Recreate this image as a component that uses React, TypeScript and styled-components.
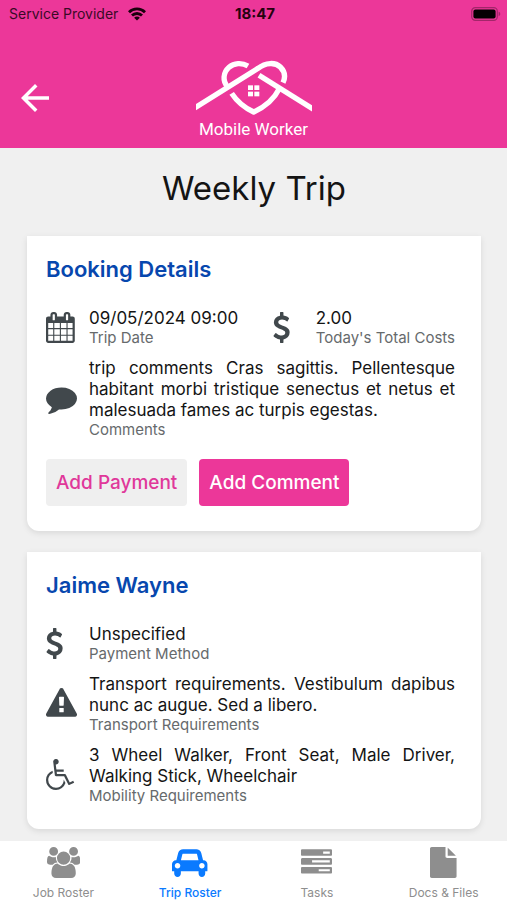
import React from "react";
import styled, { createGlobalStyle } from "styled-components";
import { MdArrowBack } from "react-icons/md";

const color = {
  pink: "#ec3799",
  page: "#f0f0f0",
  heading: "#0747ae",
  icon: "#41484c",
  text: "#141414",
  muted: "#666a6c",
  tab: "#8e8e8e",
  active: "#0a7aff",
};

const GlobalStyle = createGlobalStyle`
  *, *::before, *::after { box-sizing: border-box; }
  body {
    margin: 0;
    background: ${color.page};
    color: ${color.text};
    font-family: Inter, "Liberation Sans", sans-serif;
  }
  h1, h2, dl, dt, dd { margin: 0; }
  button { font-family: inherit; border: 0; cursor: pointer; }
`;

const Page = styled.div`
  display: flex;
  flex-direction: column;
  min-height: 100vh;
`;

const Header = styled.header`
  background: ${color.pink};
  padding-bottom: 9px;
`;

const StatusBar = styled.div`
  display: grid;
  grid-template-columns: 1fr auto 1fr;
  align-items: center;
  height: 27px;
  padding: 0 6px 0 9px;
  font-size: 14px;
  color: #3a0a26;
`;

const Carrier = styled.div`
  display: flex;
  align-items: center;
  gap: 10px;
  white-space: nowrap;
`;

const Clock = styled.time`
  font-size: 15px;
  font-weight: 700;
  color: #26020f;
`;

const BatterySlot = styled.div`
  display: flex;
  justify-content: flex-end;
`;

const Brandbar = styled.div`
  display: grid;
  grid-template-columns: 1fr auto 1fr;
  align-items: start;
  padding: 33px 14px 0;
`;

const BackButton = styled.button`
  display: flex;
  justify-self: start;
  padding: 17px 0;
  background: none;
  color: #fff;
`;

const Brand = styled.div`
  display: flex;
  flex-direction: column;
  align-items: center;
  gap: 3px;
  font-family: Roboto, sans-serif;
  font-size: 17px;
  line-height: 20px;
  color: #fff;
`;

const Main = styled.main`
  flex: 1;
  display: flex;
  flex-direction: column;
  gap: 21px;
  padding: 19px 26px 12px 27px;
`;

const Title = styled.h1`
  font-size: 33px;
  line-height: 42px;
  font-weight: 400;
  text-align: center;
  padding-bottom: 6px;
`;

const Card = styled.section`
  background: #fff;
  border-radius: 0 0 12px 12px;
  box-shadow: 0 2px 6px rgba(0, 0, 0, 0.1);
  padding: 20px 26px 25px 19px;
`;

const CardTitle = styled.h2`
  font-size: 22px;
  line-height: 26px;
  font-weight: 600;
  color: ${color.heading};
  margin-bottom: 26px;
`;

const Details = styled.dl`
  display: flex;
  flex-direction: column;
  gap: 12px;
`;

const Row = styled.div`
  display: flex;
  justify-content: space-between;
`;

const Item = styled.div<{ $grow?: boolean }>`
  display: flex;
  align-items: center;
  flex: ${(p) => (p.$grow ? "1" : "none")};
`;

const IconSlot = styled.div`
  display: flex;
  flex: none;
  width: 43px;
`;

const Field = styled.div`
  display: flex;
  flex: 1;
  flex-direction: column-reverse;
`;

const Value = styled.dd`
  font-size: 17px;
  line-height: 21px;
  text-align: justify;
`;

const Label = styled.dt`
  font-size: 15px;
  line-height: 17px;
  color: ${color.muted};
`;

const Actions = styled.div`
  display: flex;
  gap: 12px;
  margin-top: 21px;
`;

const ActionButton = styled.button<{ $primary?: boolean }>`
  height: 47px;
  padding: 0 10px;
  border-radius: 4px;
  font-size: 19px;
  font-weight: 500;
  white-space: nowrap;
  background: ${(p) => (p.$primary ? color.pink : "#efefef")};
  color: ${(p) => (p.$primary ? "#fff" : "#e0389a")};
`;

const TabBar = styled.nav`
  display: grid;
  grid-template-columns: repeat(4, 1fr);
  background: #fff;
  height: 59px;
`;

const Tab = styled.a<{ $active?: boolean }>`
  display: flex;
  flex-direction: column;
  align-items: center;
  gap: 7px;
  padding-top: 6px;
  font-size: 12px;
  line-height: 16px;
  font-weight: ${(p) => (p.$active ? 500 : 400)};
  color: ${(p) => (p.$active ? color.active : color.tab)};
  text-decoration: none;
`;

const glyphs = {
  calendar: {
    box: "64 0 1664 1792",
    d: "M192 1664h288v-288h-288v288zm352 0h320v-288h-320v288zm-352-352h288v-320h-288v320zm352 0h320v-320h-320v320zm-352-384h288v-288h-288v288zm736 736h320v-288h-320v288zm-384-736h320v-288h-320v288zm768 736h288v-288h-288v288zm-384-352h320v-320h-320v320zm-352-864v-288q0-13-9.5-22.5t-22.5-9.5h-64q-13 0-22.5 9.5t-9.5 22.5v288q0 13 9.5 22.5t22.5 9.5h64q13 0 22.5-9.5t9.5-22.5zm736 864h288v-320h-288v320zm-384-384h320v-288h-320v288zm384 0h288v-288h-288v288zm32-480v-288q0-13-9.5-22.5t-22.5-9.5h-64q-13 0-22.5 9.5t-9.5 22.5v288q0 13 9.5 22.5t22.5 9.5h64q13 0 22.5-9.5t9.5-22.5zm384-64v1280q0 52-38 90t-90 38h-1408q-52 0-90-38t-38-90v-1280q0-52 38-90t90-38h128v-96q0-66 47-113t113-47h64q66 0 113 47t47 113v96h384v-96q0-66 47-113t113-47h64q66 0 113 47t47 113v96h128q52 0 90 38t38 90z",
  },
  dollar: {
    box: "400 0 1024 1792",
    d: "M1362 1185q0 153-99.5 263.5t-258.5 136.5v175q0 14-9 23t-23 9h-135q-13 0-22.5-9.5t-9.5-22.5v-175q-66-9-127.5-31t-101.5-44.5-74-48-46.5-37.5-17.5-18q-17-21-2-41l103-135q7-10 23-12 15-2 24 9l2 2q113 99 243 125 37 8 74 8 81 0 142.5-43t61.5-122q0-28-15-53t-33.5-42-58.5-37.5-66-32-80-32.5q-39-16-61.5-25t-61.5-26.5-62.5-31-56.5-35.5-53.5-42.5-43.5-49-35.5-58-21-66.5-8.5-78q0-138 98-242t255-134v-180q0-13 9.5-22.5t22.5-9.5h135q14 0 23 9t9 23v176q57 6 110.5 23t87 33.5 63.5 37.5 39 29 15 14q17 18 5 38l-81 146q-8 15-23 16-14 3-27-7-3-3-14.5-12t-39-26.5-58.5-32-74.5-26-85.5-11.5q-95 0-155 43t-60 111q0 26 8.5 48t29.5 41.5 39.5 33 56 31 60.5 27 70 27.5q53 20 81 31.5t76 35 75.5 42.5 62 50 53 63.5 31.5 76.5 13 94z",
  },
  comment: {
    box: "0 0 1792 1792",
    d: "M1792 896q0 174-120 321.5t-326 233-450 85.5q-70 0-145-8-198 175-460 242-49 14-114 22-17 2-30.5-9t-17.5-29v-1q-3-4-.5-12t2-10 4.5-9.5l6-9 7-8.5 8-9q7-8 31-34.5t34.5-38 31-39.5 32.5-51 27-59 26-76q-157-89-247.5-220t-90.5-281q0-130 71-248.5t191-204.5 286-136.5 348-50.5q244 0 450 85.5t326 233 120 321.5z",
  },
  warning: {
    box: "0 0 1792 1792",
    d: "M1024 1375v-190q0-14-9.5-23.5t-22.5-9.5h-192q-13 0-22.5 9.5t-9.5 23.5v190q0 14 9.5 23.5t22.5 9.5h192q13 0 22.5-9.5t9.5-23.5zm-2-374l18-459q0-12-10-19-13-11-24-11h-220q-11 0-24 11-10 7-10 21l17 457q0 10 10 16.5t24 6.5h185q14 0 23.5-6.5t10.5-16.5zm-14-934l768 1408q35 63-2 126-17 29-46.5 46t-63.5 17h-1536q-34 0-63.5-17t-46.5-46q-37-63-2-126l768-1408q17-31 47-49t65-18 65 18 47 49z",
  },
  wheelchair: {
    box: "0 0 1664 1792",
    d: "M1023 1187l102 204q-58 179-210 290t-339 111q-156 0-288.5-77.5t-210-210-77.5-288.5q0-181 104.5-330t274.5-211l17 131q-122 54-195 165.5t-73 244.5q0 185 131.5 316.5t316.5 131.5q126 0 232.5-65t165-175.5 49.5-236.5zM1571 1253l58 114-256 128q-13 7-29 7-40 0-57-35l-239-477h-472q-24 0-42.5-16.5t-21.5-40.5l-96-779q-2-16 6-42 14-51 57-82.5t97-31.5q66 0 113 47t47 113q0 69-52 117.5t-120 41.5l37 289h423v128h-407l16 128h455q40 0 57 35l228 455z",
  },
  users: {
    box: "64 0 1920 1792",
    d: "M657 896q-162 5-265 128h-134q-82 0-138-40.5t-56-118.5q0-353 124-353 6 0 43.5 21t97.5 42.5 119 21.5q67 0 133-23-5 37-5 66 0 159 93 256zm1071 637q0 120-73 189.5t-194 69.5h-874q-121 0-194-69.5t-73-189.5q0-53 3.5-103.5t14-109 26.5-108.5 43-97.5 62-81 85.5-53.5 111.5-20q10 0 43 21.5t73 48 107 48 135 21.5 135-21.5 107-48 73-48 43-21.5q61 0 111.5 20t85.5 53.5 62 81 43 97.5 26.5 108.5 14 109 3.5 103.5zm-1024-1277q0 106-75 181t-181 75-181-75-75-181 75-181 181-75 181 75 75 181zm704 384q0 159-112.5 271.5t-271.5 112.5-271.5-112.5-112.5-271.5 112.5-271.5 271.5-112.5 271.5 112.5 112.5 271.5zm576 225q0 78-56 118.5t-138 40.5h-134q-103-123-265-128 93-97 93-256 0-29-5-66 66 23 133 23 59 0 119-21.5t97.5-42.5 43.5-21q124 0 124 353zm-128-609q0 106-75 181t-181 75-181-75-75-181 75-181 181-75 181 75 75 181z",
  },
  car: {
    box: "0 0 2048 1792",
    d: "M480 1088q0-66-47-113t-113-47-113 47-47 113 47 113 113 47 113-47 47-113zm36-320h1016l-89-357q-2-8-14-17.5t-21-9.5h-768q-9 0-21 9.5t-14 17.5zm1372 320q0-66-47-113t-113-47-113 47-47 113 47 113 113 47 113-47 47-113zm160-96v384q0 14-9 23t-23 9h-96v128q0 80-56 136t-136 56-136-56-56-136v-128h-1024v128q0 80-56 136t-136 56-136-56-56-136v-128h-96q-14 0-23-9t-9-23v-384q0-93 65.5-158.5t158.5-65.5h28l105-419q23-94 104-157.5t179-63.5h768q98 0 179 63.5t104 157.5l105 419h28q93 0 158.5 65.5t65.5 158.5z",
  },
  tasks: {
    box: "0 0 1792 1792",
    d: "M1024 1408h640v-128h-640v128zm-384-512h1024v-128h-1024v128zm640-512h384v-128h-384v128zm512 832v256q0 26-19 45t-45 19h-1664q-26 0-45-19t-19-45v-256q0-26 19-45t45-19h1664q26 0 45 19t19 45zm0-512v256q0 26-19 45t-45 19h-1664q-26 0-45-19t-19-45v-256q0-26 19-45t45-19h1664q26 0 45 19t19 45zm0-512v256q0 26-19 45t-45 19h-1664q-26 0-45-19t-19-45v-256q0-26 19-45t45-19h1664q26 0 45 19t19 45z",
  },
  file: {
    box: "128 0 1536 1792",
    d: "M1152 512v-472q22 14 36 28l408 408q14 14 28 36h-472zm-128 32q0 40 28 68t68 28h544v1056q0 40-28 68t-68 28h-1344q-40 0-68-28t-28-68v-1600q0-40 28-68t68-28h800v544z",
  },
};

type GlyphName = keyof typeof glyphs;

const GlyphSvg = styled.svg`
  display: block;
  height: 31px;
  width: auto;
  fill: currentColor;
`;

const DetailIcon = styled(GlyphSvg)`
  color: ${color.icon};
`;

function Glyph({ name, as: Svg = GlyphSvg }: { name: GlyphName; as?: typeof GlyphSvg }) {
  return (
    <Svg viewBox={glyphs[name].box} aria-hidden="true">
      <path d={glyphs[name].d} />
    </Svg>
  );
}

function Detail({ icon, value, label, grow }: { icon: GlyphName; value: string; label: string; grow?: boolean }) {
  return (
    <Item $grow={grow}>
      <IconSlot>
        <Glyph name={icon} as={DetailIcon} />
      </IconSlot>
      <Field>
        <Label>{label}</Label>
        <Value>{value}</Value>
      </Field>
    </Item>
  );
}

function WifiIcon() {
  return (
    <svg width="18" height="14" viewBox="0 0 18 14" aria-label="Wi-Fi">
      <g fill="none" stroke="#1a000c" strokeWidth="2.8">
        <path d="M1 5.2C5.4 .8 12.6 .8 17 5.2" />
        <path d="M4 8.6C6.8 5.8 11.2 5.8 14 8.6" />
      </g>
      <path d="M9 13.6 6.1 10.7C7.7 9.2 10.3 9.2 11.9 10.7Z" fill="#1a000c" />
    </svg>
  );
}

function BatteryIcon() {
  return (
    <svg width="30" height="14" viewBox="0 0 30 14" aria-label="Battery full">
      <rect x="0.7" y="0.7" width="25.6" height="12.6" rx="3.6" fill="none" stroke="#a3266a" strokeWidth="1.2" />
      <rect x="2.4" y="2.4" width="22.2" height="9.2" rx="2" fill="#050003" />
      <path d="M27.6 4.8C29.8 5.4 29.8 8.6 27.6 9.2Z" fill="#a3266a" />
    </svg>
  );
}

function HeartHouseLogo() {
  return (
    <svg width="116" height="56" viewBox="50 31 348 168" aria-hidden="true">
      <g fill="none" stroke="#fff" strokeWidth="16">
        <path d="M206 49C187 38 164 40 149 53C131 69 129 94 145 112" />
        <path d="M44 176L236 56C259 38 288 37 303 52C317 66 319 82 311 99" />
        <path d="M239 77L404 180" />
        <path d="M157 131C172 154 195 174 223 187C254 173 283 151 300 117" strokeLinejoin="round" />
      </g>
      <g fill="#fff">
        <rect x="206" y="107" width="15" height="14" />
        <rect x="225" y="107" width="15" height="14" />
        <rect x="206" y="126" width="15" height="14" />
        <rect x="225" y="126" width="15" height="14" />
      </g>
    </svg>
  );
}

const tabs: { icon: GlyphName; label: string; active?: boolean }[] = [
  { icon: "users", label: "Job Roster" },
  { icon: "car", label: "Trip Roster", active: true },
  { icon: "tasks", label: "Tasks" },
  { icon: "file", label: "Docs & Files" },
];

export default function App() {
  return (
    <Page>
      <GlobalStyle />
      <Header>
        <StatusBar>
          <Carrier>
            Service Provider
            <WifiIcon />
          </Carrier>
          <Clock>18:47</Clock>
          <BatterySlot>
            <BatteryIcon />
          </BatterySlot>
        </StatusBar>
        <Brandbar>
          <BackButton type="button" aria-label="Back">
            <MdArrowBack size={42} />
          </BackButton>
          <Brand>
            <HeartHouseLogo />
            Mobile Worker
          </Brand>
        </Brandbar>
      </Header>
      <Main>
        <Title>Weekly Trip</Title>
        <Card>
          <CardTitle>Booking Details</CardTitle>
          <Details>
            <Row>
              <Detail icon="calendar" value="09/05/2024 09:00" label="Trip Date" />
              <Detail icon="dollar" value="2.00" label="Today's Total Costs" />
            </Row>
            <Row>
              <Detail
                grow
                icon="comment"
                value="trip comments Cras sagittis. Pellentesque habitant morbi tristique senectus et netus et malesuada fames ac turpis egestas."
                label="Comments"
              />
            </Row>
          </Details>
          <Actions>
            <ActionButton type="button">Add Payment</ActionButton>
            <ActionButton type="button" $primary>
              Add Comment
            </ActionButton>
          </Actions>
        </Card>
        <Card>
          <CardTitle>Jaime Wayne</CardTitle>
          <Details>
            <Row>
              <Detail grow icon="dollar" value="Unspecified" label="Payment Method" />
            </Row>
            <Row>
              <Detail
                grow
                icon="warning"
                value="Transport requirements. Vestibulum dapibus nunc ac augue. Sed a libero."
                label="Transport Requirements"
              />
            </Row>
            <Row>
              <Detail
                grow
                icon="wheelchair"
                value="3 Wheel Walker, Front Seat, Male Driver, Walking Stick, Wheelchair"
                label="Mobility Requirements"
              />
            </Row>
          </Details>
        </Card>
      </Main>
      <TabBar>
        {tabs.map((tab) => (
          <Tab key={tab.label} href="#" $active={tab.active} aria-current={tab.active ? "page" : undefined}>
            <Glyph name={tab.icon} />
            {tab.label}
          </Tab>
        ))}
      </TabBar>
    </Page>
  );
}
